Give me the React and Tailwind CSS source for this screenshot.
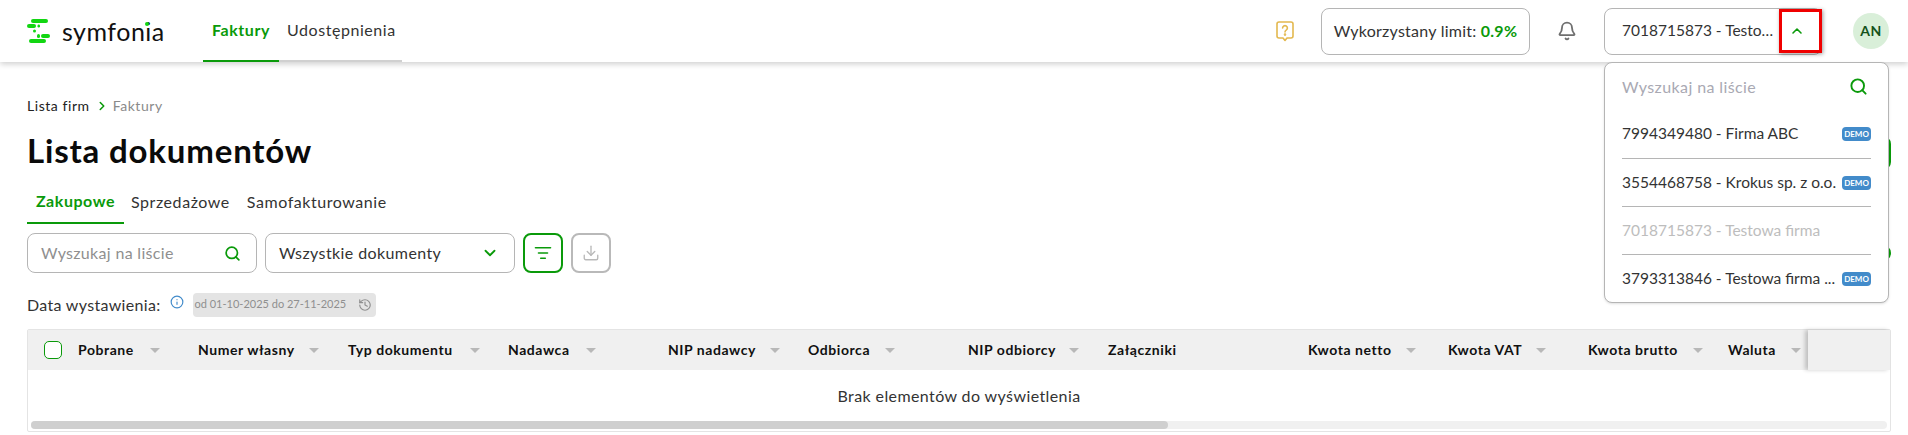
import React from 'react';
import { Bell, ChevronDown, ChevronRight, ChevronUp, Download, History, Info, ListFilter, Search } from 'lucide-react';

const COLUMNS = [
  { label: 'Pobrane', width: 'w-[120px]', text: 'w-[57px]', sort: true },
  { label: 'Numer własny', width: 'w-[150px]', text: 'w-[96px]', sort: true },
  { label: 'Typ dokumentu', width: 'w-[160px]', text: 'w-[107px]', sort: true },
  { label: 'Nadawca', width: 'w-[160px]', text: 'w-[63px]', sort: true },
  { label: 'NIP nadawcy', width: 'w-[140px]', text: 'w-[87px]', sort: true },
  { label: 'Odbiorca', width: 'w-[160px]', text: 'w-[62px]', sort: true },
  { label: 'NIP odbiorcy', width: 'w-[140px]', text: 'w-[86px]', sort: true },
  { label: 'Załączniki', width: 'w-[200px]', text: 'w-[67px]', sort: false },
  { label: 'Kwota netto', width: 'w-[140px]', text: 'w-[83px]', sort: true },
  { label: 'Kwota VAT', width: 'w-[140px]', text: 'w-[73px]', sort: true },
  { label: 'Kwota brutto', width: 'w-[140px]', text: 'w-[90px]', sort: true },
  { label: 'Waluta', width: 'w-[81px]', text: 'w-[48px]', sort: true },
];

const COMPANIES = [
  { name: '7994349480 - Firma ABC', demo: true },
  { name: '3554468758 - Krokus sp. z o.o.', demo: true },
  { name: '7018715873 - Testowa firma', disabled: true },
  { name: '3793313846 - Testowa firma ...', demo: true },
];

const Logo = () => (
  <svg width="23" height="24" viewBox="0 0 23 24" fill="#12d612">
    <rect x="4" y="0" width="17" height="4" rx="2" />
    <rect x="0" y="5" width="9" height="4" rx="2" />
    <rect x="10.5" y="5.5" width="2.5" height="3" rx="1.2" />
    <rect x="6" y="10.5" width="3" height="3" rx="1.5" />
    <rect x="10" y="15" width="3" height="4" rx="1.5" />
    <rect x="14" y="15" width="9" height="4" rx="2" />
    <rect x="2" y="20" width="17" height="4" rx="2" />
  </svg>
);

const QuestionIcon = () => (
  <svg width="18" height="21" viewBox="0 0 18 21" fill="none" stroke="#e3b84f" strokeWidth="1.6">
    <path d="M3 1h12a2 2 0 0 1 2 2v12a2 2 0 0 1-2 2h-4l-2 2.5L7 17H3a2 2 0 0 1-2-2V3a2 2 0 0 1 2-2z" strokeLinejoin="round" />
    <path d="M6.6 7a2.4 2.4 0 1 1 3.6 2.1c-.8.5-1.2 1-1.2 1.9" strokeLinecap="round" />
    <circle cx="9" cy="13.6" r=".5" fill="#e3b84f" />
  </svg>
);

const SortArrow = () => (
  <svg width="10" height="5" viewBox="0 0 10 5" className="ml-[15px] shrink-0">
    <polygon points="0,0 10,0 5,5" fill="#b8b8b8" />
  </svg>
);

const CompanyMenu = () => (
  <div className="absolute left-[1604px] top-[62px] z-20 h-[241px] w-[285px] rounded-lg border border-[#b5b5b5] bg-white px-[17px] shadow-sm">
    <div className="flex h-[47px] items-center justify-between pr-[3px] tracking-[0.025em]">
      <span className="text-[#a9a9b3]">Wyszukaj na liście</span>
      <Search size={19} strokeWidth={2.4} className="text-[#0a9a0a]" />
    </div>
    {COMPANIES.map((company, i) => (
      <div
        key={company.name}
        className={`flex h-[48px] items-center justify-between whitespace-nowrap text-[15.5px] tracking-normal ${i > 0 ? 'border-t border-[#b5b5b5]' : ''} ${company.disabled ? 'text-[#bdbdbd]' : 'text-[#333]'}`}
      >
        <span>{company.name}</span>
        {company.demo && (
          <span className="flex h-[14px] w-[29px] items-center justify-center rounded-[4px] bg-[#428bca] text-[8px] font-bold text-white">
            DEMO
          </span>
        )}
      </div>
    ))}
  </div>
);

const Header = () => (
  <header className="relative z-10 flex h-[62px] items-stretch bg-white pl-[27px] shadow-[0_2px_6px_rgba(0,0,0,0.2)]">
    <div className="flex w-[176px] items-center">
      <Logo />
      <span className="relative ml-[12px] text-[25px] leading-none tracking-[0.02em] text-[#111]">
        symfonia
        <span className="absolute left-[83px] top-[3px] h-[4px] w-[4px] rounded-full bg-[#12d612]" />
      </span>
    </div>
    <nav className="flex border-b-2 border-[#d0d0d0]">
      <a className="-mb-[2px] flex w-[76px] items-center justify-center border-b-2 border-[#0a9a0a] font-bold text-[#0a9a0a]">
        Faktury
      </a>
      <a className="flex w-[123px] items-center pl-[8px] text-[#333]">Udostępnienia</a>
    </nav>
    <div className="ml-auto flex items-center pr-[19px]">
      <QuestionIcon />
      <div className="ml-[27px] flex h-[47px] w-[209px] items-center justify-center rounded-lg border border-[#b5b5b5] tracking-[0.015em] text-[#333]">
        Wykorzystany limit:&nbsp;<b className="text-[#0a9a0a]">0.9%</b>
      </div>
      <Bell size={20} strokeWidth={2.2} className="ml-[27px] text-[#6f6f6f]" />
      <div className="ml-[27px] flex h-[47px] w-[218px] items-center rounded-lg border border-[#b5b5b5] pl-[17px] text-[15.5px] tracking-normal text-[#333]">
        <span className="w-[155px] truncate">7018715873 - Testowa firma</span>
        <ChevronUp size={16} strokeWidth={2.4} className="ml-[12px] text-[#0a9a0a]" />
      </div>
      <div className="ml-[31px] flex h-[36px] w-[36px] items-center justify-center rounded-full bg-[#d9efd9] text-sm font-bold text-[#14521a]">
        AN
      </div>
    </div>
  </header>
);

const Table = () => (
  <div className="mt-[12px] h-[103px] w-[1864px] rounded-[2px] border border-[#e4e4e4]">
    <div className="flex h-[40px] bg-[#f0f0f0]">
      <div className="flex w-[50px] shrink-0 items-center pl-[16px]">
        <span className="h-[18px] w-[18px] rounded-[5px] border border-[#0a9a0a] bg-white" />
      </div>
      <div className="flex min-w-0 flex-1 items-center">
        {COLUMNS.map((col) => (
          <div key={col.label} className={`flex shrink-0 items-center text-sm font-bold text-[#111] ${col.width}`}>
            <span className={`whitespace-nowrap ${col.text}`}>{col.label}</span>
            {col.sort && <SortArrow />}
          </div>
        ))}
      </div>
      <div className="w-[82px] shrink-0 shadow-[-3px_0_4px_rgba(0,0,0,0.2)]" />
    </div>
    <div className="flex h-[51px] items-center justify-center tracking-[0.025em] text-[#333]">Brak elementów do wyświetlenia</div>
    <div className="mx-[3px] h-[8px] rounded bg-[#f0f0f0]">
      <div className="h-full w-[1137px] rounded bg-[#cfcfcf]" />
    </div>
  </div>
);

const App = () => (
  <div className="relative h-[435px] w-[1908px] overflow-hidden bg-white font-['Lato',sans-serif] text-base text-[#111] tracking-[0.035em]">
    <Header />
    <CompanyMenu />

    {/* annotation round the arrow */}
    <div className="absolute left-[1779px] top-[9px] z-30 h-[44px] w-[43px] border-[3px] border-[#f00000] shadow-[1px_1px_4px_rgba(0,0,0,0.4)]" />

    {/* buttons that stick out behind the menu */}
    <div className="absolute left-[1860px] top-[136px] h-[34px] w-[31px] rounded-lg border-2 border-[#0a9a0a]" />
    <div className="absolute left-[1860px] top-[245px] h-[16px] w-[31px] rounded-full border-2 border-[#0a9a0a]" />

    <main className="px-[27px]">
      <div className="mt-[35px] flex h-[18px] items-center text-sm">
        <span className="text-[#222]">Lista firm</span>
        <ChevronRight size={14} strokeWidth={2.6} className="mx-[5px] text-[#0a9a0a]" />
        <span className="-ml-[1px] text-[#8a8a8a]">Faktury</span>
      </div>
      <h1 className="mt-[15px] text-[33px] font-bold leading-[40px] tracking-[0.025em] text-[#0a0a0a]">Lista dokumentów</h1>

      <div className="mt-[13px] flex h-[41px] items-stretch">
        <a className="flex w-[97px] items-center justify-center border-b-2 border-[#0a9a0a] pb-[4px] font-bold text-[#0a9a0a]">
          Zakupowe
        </a>
        <a className="flex items-center pb-[4px] pl-[7px] text-[#333]">Sprzedażowe</a>
        <a className="flex items-center pb-[4px] pl-[17px] text-[#333]">Samofakturowanie</a>
      </div>

      <div className="mt-[9px] flex items-center gap-[8px]">
        <div className="flex h-[40px] w-[230px] items-center justify-between rounded-lg border border-[#b5b5b5] pl-[13px] pr-[15px] tracking-[0.02em] text-[#8f8f8f]">
          Wyszukaj na liście
          <Search size={17} strokeWidth={2.4} className="text-[#0a9a0a]" />
        </div>
        <div className="flex h-[40px] w-[250px] items-center justify-between rounded-lg border border-[#b5b5b5] pl-[13px] pr-[15px] tracking-[0.025em] text-[#333]">
          Wszystkie dokumenty
          <ChevronDown size={18} strokeWidth={2.4} className="text-[#0a9a0a]" />
        </div>
        <button className="flex h-[40px] w-[40px] items-center justify-center rounded-lg border-2 border-[#0a9a0a] text-[#0a9a0a]">
          <ListFilter size={18} strokeWidth={2.2} />
        </button>
        <button className="flex h-[40px] w-[40px] items-center justify-center rounded-lg border-2 border-[#b9b9b9] text-[#b9b9b9]">
          <Download size={18} strokeWidth={1.8} />
        </button>
      </div>

      <div className="mt-[19px] flex h-[25px] items-center">
        <span className="tracking-[0.02em] text-[#333]">Data wystawienia:</span>
        <Info size={14} className="mb-[6px] ml-[9px] text-[#428bca]" />
        <div className="ml-[9px] flex h-[24px] w-[183px] items-center justify-between whitespace-nowrap rounded-[4px] bg-[#e4e4e4] pl-[2px] pr-[4px] text-[11px] tracking-normal text-[#8f8f8f]">
          od 01-10-2025 do 27-11-2025
          <History size={14} />
        </div>
      </div>

      <Table />
    </main>
  </div>
);

export default App;
